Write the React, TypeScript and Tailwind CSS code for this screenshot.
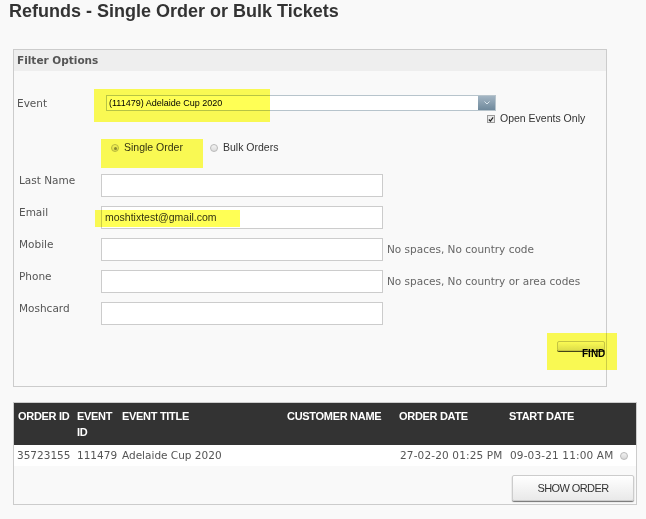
import React from "react";

const fields = [
  { label: "Last Name", value: "", hint: "" },
  { label: "Email", value: "moshtixtest@gmail.com", hint: "", mark: true },
  { label: "Mobile", value: "", hint: "No spaces, No country code" },
  { label: "Phone", value: "", hint: "No spaces, No country or area codes" },
  { label: "Moshcard", value: "", hint: "" },
];

const orders = [
  {
    orderId: "35723155",
    eventId: "111479",
    title: "Adelaide Cup 2020",
    customer: "",
    orderDate: "27-02-20 01:25 PM",
    startDate: "09-03-21 11:00 AM",
  },
];

function Mark({ className }: { className: string }) {
  return <div className={`absolute bg-[#ffff55] mix-blend-multiply pointer-events-none ${className}`} />;
}

function Radio({ checked }: { checked?: boolean }) {
  return (
    <span className="w-[8px] h-[8px] rounded-full border border-[#b9b9b9] bg-gradient-to-b from-[#f4f4f4] to-[#dcdcdc] flex items-center justify-center shrink-0">
      {checked && <span className="w-[3px] h-[3px] rounded-full bg-[#8a8a8a]" />}
    </span>
  );
}

export default function App() {
  return (
    <div className="w-[646px] h-[519px] overflow-hidden bg-[#f9f9f9] text-[#555]">
      <h1 className="pl-[9px] text-[18px] leading-[22px] font-bold text-[#333] font-['Liberation_Sans',Arial,sans-serif]">
        Refunds - Single Order or Bulk Tickets
      </h1>

      {/* filter box */}
      <div className="ml-[13px] mt-[27px] w-[594px] h-[338px] border border-[#cccccc] bg-[#f9f9f9]">
        <div className="h-[21px] bg-[#eeeeee] pl-[3px] pt-[1px] flex items-center text-[10.5px] font-bold text-[#555] font-['DejaVu_Sans',Verdana,sans-serif]">
          Filter Options
        </div>

        <div className="relative mt-[24px] h-[16px] flex items-center">
          <Mark className="left-[80px] top-[-6px] w-[176px] h-[33px]" />
          <span className="w-[92px] pl-[3px] text-[10.5px] leading-[11px] font-['DejaVu_Sans',Verdana,sans-serif]">Event</span>
          <div className="w-[390px] h-[16px] flex border border-[#b7c4cc] bg-white">
            <span className="flex-1 pl-[2px] text-[9px] leading-[14px] text-black font-['Liberation_Sans',Arial,sans-serif]">
              (111479) Adelaide Cup 2020
            </span>
            <span className="w-[17px] h-full bg-gradient-to-b from-[#a3b5c3] to-[#6f899c] flex items-center justify-center">
              <svg width="6" height="4" viewBox="0 0 6 4">
                <path d="M0.5 0.5 L3 3 L5.5 0.5" fill="none" stroke="#d8e4ec" strokeWidth="1" />
              </svg>
            </span>
          </div>
        </div>

        <div className="mt-[2px] h-[12px] pl-[473px] flex items-center gap-[5px]">
          <span className="w-[8px] h-[8px] border border-[#9a9a9a] bg-[#e9e9e9] flex items-center justify-center">
            <svg width="7" height="7" viewBox="0 0 7 7">
              <path d="M1 3.5 L2.8 5.3 L6 1" fill="none" stroke="#222" strokeWidth="1.4" />
            </svg>
          </span>
          <span className="text-[10.5px] text-[#333] font-['Liberation_Sans',Arial,sans-serif]">Open Events Only</span>
        </div>

        <div className="relative mt-[17px] h-[12px] pl-[97px] flex items-center">
          <Mark className="left-[87px] top-[-3px] w-[102px] h-[29px]" />
          <Radio checked />
          <span className="ml-[5px] text-[10.5px] text-[#333] font-['Liberation_Sans',Arial,sans-serif]">Single Order</span>
          <span className="ml-[27px]">
            <Radio />
          </span>
          <span className="ml-[5px] text-[10.5px] text-[#333] font-['Liberation_Sans',Arial,sans-serif]">Bulk Orders</span>
        </div>

        <div className="mt-[20px] flex flex-col gap-[9px]">
          {fields.map((f) => (
            <div key={f.label} className="relative h-[23px] flex items-start pl-[5px]">
              {f.mark && <Mark className="left-[81px] top-[4px] w-[145px] h-[17px]" />}
              <span className="w-[82px] pt-[1px] text-[10.5px] leading-[11px] text-[#555] font-['DejaVu_Sans',Verdana,sans-serif]">
                {f.label}
              </span>
              <div className="w-[282px] h-[23px] border border-[#cccccc] bg-white flex items-center pl-[3px] text-[10.5px] text-[#333] font-['Liberation_Sans',Arial,sans-serif]">
                {f.value}
              </div>
              {f.hint && (
                <span className="self-center ml-[4px] text-[10.5px] text-[#666] font-['DejaVu_Sans',Verdana,sans-serif]">
                  {f.hint}
                </span>
              )}
            </div>
          ))}
        </div>

        <div className="mt-[16px] flex justify-end pr-[1px]">
          <div className="relative w-[48px] h-[11px]">
            <Mark className="left-[-10px] top-[-8px] w-[70px] h-[37px]" />
            <div className="w-[48px] h-[10px] rounded-[2px] border border-[#c4c4c4] bg-gradient-to-b from-[#fafafa] to-[#dedede] shadow-[0_1px_0_#444]" />
            <span className="absolute left-[25px] top-[8px] text-[10px] leading-[10px] font-bold text-black font-['Liberation_Sans',Arial,sans-serif]">
              FIND
            </span>
          </div>
        </div>
      </div>

      {/* results table */}
      <div className="ml-[13px] mt-[15px] w-[624px] border border-[#cccccc] bg-[#f9f9f9] pb-[3px]">
        <div className="h-[42px] bg-[#333333] grid grid-cols-[59px_45px_165px_112px_110px_111px_1fr] text-white text-[11px] leading-[16px] font-bold tracking-[-0.3px] font-['Liberation_Sans',Tahoma,sans-serif]">
          <div className="pl-[4px] pt-[5px]">ORDER ID</div>
          <div className="pl-[4px] pt-[5px]">EVENT ID</div>
          <div className="pl-[4px] pt-[5px]">EVENT TITLE</div>
          <div className="pl-[4px] pt-[5px]">CUSTOMER NAME</div>
          <div className="pl-[4px] pt-[5px]">ORDER DATE</div>
          <div className="pl-[4px] pt-[5px]">START DATE</div>
          <div />
        </div>
        {orders.map((o) => (
          <div
            key={o.orderId}
            className="h-[21px] bg-white grid grid-cols-[59px_45px_165px_112px_110px_111px_1fr] items-center whitespace-nowrap text-[10.5px] text-[#555] font-['DejaVu_Sans',Verdana,sans-serif]"
          >
            <div className="pl-[3px]">{o.orderId}</div>
            <div className="pl-[4px]">{o.eventId}</div>
            <div className="pl-[4px]">{o.title}</div>
            <div className="pl-[4px]">{o.customer}</div>
            <div className="pl-[5px] tracking-[0.15px]">{o.orderDate}</div>
            <div className="pl-[5px] tracking-[0.15px]">{o.startDate}</div>
            <div className="pl-[4px]">
              <span className="block w-[8px] h-[8px] rounded-full border border-[#b9b9b9] bg-gradient-to-b from-[#f2f2f2] to-[#d8d8d8]" />
            </div>
          </div>
        ))}
        <div className="mt-[9px] flex justify-end pr-[2px]">
          <button className="w-[122px] h-[26px] border border-[#cccccc] rounded-[2px] bg-gradient-to-b from-white to-[#e9e9e9] shadow-[0_1px_1px_rgba(0,0,0,0.55)] text-[11px] tracking-[-0.6px] text-[#333] font-['Liberation_Sans',Tahoma,sans-serif]">
            SHOW ORDER
          </button>
        </div>
      </div>
    </div>
  );
}
